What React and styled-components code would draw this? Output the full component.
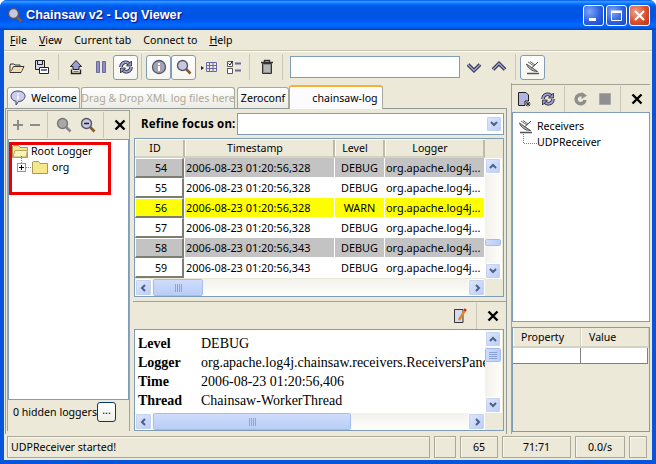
import React from "react";
import styled, { createGlobalStyle } from "styled-components";

const Global = createGlobalStyle`
  html, body { margin: 0; padding: 0; }
  body { font-family: "Noto Sans", "Liberation Sans", sans-serif; font-size: 10.6px; color: #000; }
  * { box-sizing: border-box; }
`;

/* window chrome */
const Win = styled.div`
  width: 656px; height: 464px; display: flex; flex-direction: column; overflow: hidden;
  background: #0855dd; border-radius: 7px 7px 0 0; position: relative;
`;
const TitleBar = styled.div`
  height: 30px; flex: none; display: flex; align-items: center; padding: 0 6px 0 7px;
  background: linear-gradient(180deg,#0058ee 0%,#3593ff 5%,#288eff 8%,#127dff 11%,#0369fb 15%,#0057e5 24%,#0054e3 50%,#0055eb 62%,#005bf5 72%,#026afe 82%,#0062ef 90%,#0052d6 96%,#0040ab 100%);
`;
const TitleText = styled.div`
  margin-left: 3px; flex: 1; color: #fff; font: bold 12.7px "Liberation Sans", sans-serif;
  text-shadow: 1px 1px 1px #0f1089;
`;
const WinBtn = styled.div`
  width: 21px; height: 21px; margin-left: 2px; border: 1px solid #fff; border-radius: 3px;
  display: flex; align-items: center; justify-content: center;
  background: ${(p) => p.$close
    ? "radial-gradient(circle at 30% 30%, #f0a08a, #d9512c 55%, #b5321a)"
    : "radial-gradient(circle at 30% 30%, #7fa5f5, #2b62e0 55%, #1c47c8)"};
`;
const Body = styled.div`
  flex: 1; margin: 0 4px 4px; background: #ece9d8; display: flex; flex-direction: column; min-height: 0;
`;
const MenuBar = styled.div`
  height: 21px; flex: none; display: flex; align-items: center; padding: 0 0 1px 6px; gap: 12px;
  border-bottom: 1px solid #c5c2b2; box-shadow: 0 1px 0 #fff;
  u { text-decoration: underline; }
`;
const Toolbar = styled.div`
  height: 32px; flex: none; display: flex; align-items: center;
`;
const ToolBtn = styled.div`
  width: 25px; height: 25px; flex: none; display: flex; align-items: center; justify-content: center;
  border-radius: 3px;
  ${(p) => p.$on && "background: linear-gradient(180deg,#fff,#f6f5ef); border: 1px solid #7f9db9;"}
`;
const Sep = styled.div`
  width: 1px; height: 26px; flex: none; margin: 0 4px 0 ${(p) => p.$l ?? 4}px; background: #c9c6b6;
`;
const SearchInput = styled.div`
  width: 170px; height: 22px; flex: none; margin: 0 1px 0 3px; background: #fff; border: 1px solid #7f9db9;
`;

/* content split */
const Content = styled.div`
  flex: 1; min-height: 0; display: flex;
`;
const TabArea = styled.div`
  width: 503px; flex: none; display: flex; flex-direction: column; padding: 2px 0 0 1px;
`;
const TabStrip = styled.div`
  height: 23px; flex: none; display: flex; align-items: flex-end; padding-left: 2px; position: relative; z-index: 1;
`;
const Tab = styled.div`
  width: ${(p) => p.$w}px; height: 21px; flex: none; margin-right: ${(p) => p.$mr ?? 1}px;
  display: flex; align-items: center; justify-content: center; gap: 5px; white-space: nowrap;
  color: ${(p) => (p.$off ? "#aca899" : "#000")};
  border: 1px solid #a8a99c; border-bottom: none; border-radius: 3px 3px 0 0;
  background: ${(p) => (p.$on ? "#fcfcfe" : "linear-gradient(180deg,#fff,#ecebe3)")};
  ${(p) => p.$on && "border-top: 2px solid #f7b034; margin-bottom: -1px; height: 24px; padding-left: 18px;"}
`;
const TabPane = styled.div`
  flex: 1; min-height: 0; display: flex; border: 1px solid #919b9c; border-bottom: none; padding: 1px 0 3px 1px;
`;
const LeftPanel = styled.div`
  width: 123px; flex: none; display: flex; flex-direction: column; border: 1px solid #a5a293; border-bottom: none;
`;
const PaneBar = styled.div`
  height: ${(p) => p.$h || 28}px; flex: none; display: flex; align-items: center;
  justify-content: ${(p) => (p.$end ? "flex-end" : "flex-start")}; padding-left: ${(p) => p.$pl || 0}px;
`;
const PaneBtn = styled.div`
  width: ${(p) => p.$w || 24}px; height: 22px; flex: none; display: flex; align-items: center; justify-content: center;
`;
const TreeBox = styled.div`
  flex: 1; min-height: 0; background: #fff; border: 1px solid #7f9db9; position: relative; padding: ${(p) => p.$pad || "3px 0 0 3px"};
`;
const TreeRow = styled.div`
  height: 16px; display: flex; align-items: center; gap: ${(p) => p.$gap ?? 3}px; padding-left: ${(p) => p.$pl || 0}px;
`;
const OrgLabel = styled.span`
  margin-left: 4px;
`;
const Mark = styled.div`
  position: absolute; left: 0; top: 2px; width: 102px; height: 53px; border: 3px solid #ee0000;
`;
const PanelFoot = styled.div`
  height: 31px; flex: none; display: flex; align-items: center; justify-content: space-between; padding: 0 13px 7px 5px;
  white-space: nowrap;
`;
const DotsBtn = styled.div`
  width: 19px; height: 20px; display: flex; align-items: center; justify-content: center; padding-bottom: 4px;
  background: linear-gradient(180deg,#fff,#f0efe6); border: 1px solid #003c74; border-radius: 3px;
`;
const Center = styled.div`
  flex: 1; min-width: 0; margin-left: 4px; display: flex; flex-direction: column; padding-right: 1px;
`;
const RefineRow = styled.div`
  height: 28px; flex: none; display: flex; align-items: center; padding: 0 0 1px 7px;
`;
const RefineLabel = styled.div`
  width: 96px; flex: none; font-weight: bold; font-size: 11.5px; letter-spacing: 0.2px;
`;
const Combo = styled.div`
  flex: 1; height: 22px; margin-right: 1px; display: flex; justify-content: flex-end; align-items: center; padding-right: 1px;
  background: #fff; border: 1px solid #7f9db9;
`;
const ScrollFrame = styled.div`
  height: ${(p) => (p.$h ? p.$h + "px" : "auto")}; ${(p) => !p.$h && "flex: 1;"} min-height: 0; flex-shrink: 0;
  margin-right: 1px; display: flex; flex-direction: column; border: 1px solid #7f9db9; background: #ece9d8;
`;
const ScrollMain = styled.div`
  flex: 1; min-height: 0; display: flex;
`;
const Columns = styled.div`
  width: 350px; flex: none; overflow: hidden;
`;
const HeadRow = styled.div`
  height: 19px; display: flex; border-top: 1px solid #fff;
`;
const HeadCell = styled.div`
  width: ${(p) => p.$w}px; flex: none; display: flex; align-items: center; justify-content: center; padding-right: 8px;
  background: #ece9d8; border-right: 2px solid #bdbaa9; border-bottom: 2px solid #d5d2c1; box-shadow: inset 1px 0 0 #fff;
`;
const Row = styled.div`
  height: 20px; display: flex; background: #fff;
`;
const NumCell = styled.div`
  width: 49px; height: 20px; flex: none; display: flex; align-items: center; justify-content: center; padding-left: 4px;
  background: ${(p) => p.$bg}; border: 1px solid #fff; border-right: 2px solid #7d7d70; border-bottom: 2px solid #7d7d70;
`;
const DataCell = styled.div`
  width: ${(p) => p.$w}px; height: 19px; flex: none; display: flex; align-items: center; font-size: 10.9px;
  justify-content: ${(p) => (p.$mid ? "center" : "flex-start")}; padding-left: ${(p) => (p.$mid ? 0 : 1)}px; margin-left: 1px;
  background: ${(p) => p.$bg}; white-space: nowrap; overflow: hidden;
`;
const VTrack = styled.div`
  width: 17px; flex: none; display: flex; flex-direction: column; background: linear-gradient(90deg,#f3f1ec,#fefefb);
  padding-top: ${(p) => p.$pt || 0}px;
`;
const Corner = styled.div`
  height: 19px; margin-top: -19px; flex: none; background: #ece9d8;
`;
const HTrack = styled.div`
  height: 17px; flex: none; display: flex; align-items: stretch; background: linear-gradient(180deg,#f3f1ec,#fefefb);
  width: 350px;
`;
const ScrollBtn = styled.div`
  width: ${(p) => (p.$v ? 16 : 17)}px; height: ${(p) => (p.$v ? 16 : 17)}px; flex: none; display: flex; align-items: center; justify-content: center;
  background: linear-gradient(135deg,#dfe8fe,#b9cbf8); border: 1px solid #fff; border-radius: 2px; box-shadow: 0 0 0 1px #c6d3ef inset;
  ${(p) => p.$last && (p.$v ? "margin-top: auto;" : "margin-left: auto;")}
`;
const Thumb = styled.div`
  ${(p) => (p.$v
    ? `width: 16px; height: ${p.$len}px; margin-top: ${p.$off}px; flex-direction: column;`
    : `width: ${p.$len}px; margin-left: ${p.$off}px;`)}
  flex-shrink: 0; display: flex; align-items: center; justify-content: center; gap: 1px;
  background: linear-gradient(${(p) => (p.$v ? "90deg" : "180deg")},#cfdcfb,#b9cdf7);
  border: 1px solid #fff; border-radius: 2px; outline: 1px solid #a7bde9; outline-offset: -1px;
  i { display: block; background: #8aa3dd; ${(p) => (p.$v ? "width: 8px; height: 1px;" : "width: 1px; height: 8px;")} }
`;
const Splitter = styled.div`
  height: 5px; flex: none; margin: 0 -1px; border-bottom: 1px solid #a5a293;
`;
const Details = styled.div`
  width: 350px; flex: none; background: #fff; padding: 4px 0 0 3px; overflow: hidden;
  font: 14px "Liberation Serif", serif;
`;
const DetailRow = styled.div`
  height: 19px; display: flex; align-items: center; white-space: nowrap;
  b { width: 63px; flex: none; }
`;

/* right column */
const RightPanel = styled.div`
  flex: 1; min-width: 0; display: flex; flex-direction: column; margin-left: 4px; padding: 1px 2px 2px 0;
  border-left: 1px solid #a5a293;
`;
const RightTop = styled.div`
  height: 28px; flex: none; display: flex; align-items: center; border-top: 1px solid #a5a293;
`;
const PropBox = styled.div`
  height: 105px; flex: none; margin-top: 5px; border: 1px solid #7f9db9;
`;
const PropHead = styled.div`
  height: 20px; display: flex; border-bottom: 2px solid #d5d2c1;
`;
const PropHeadCell = styled.div`
  width: ${(p) => p.$w}px; flex: none; padding-left: ${(p) => p.$pl}px; display: flex; align-items: center;
  border-right: 1px solid #d0cdbc; box-shadow: inset 1px 0 0 #fff;
`;
const PropRow = styled.div`
  height: 16px; display: flex; background: #fff; border-bottom: 1px solid #808080; margin-right: 1px;
`;
const PropCell = styled.div`
  width: ${(p) => p.$w}px; flex: none; border-right: 1px solid #808080;
`;

/* status bar */
const Status = styled.div`
  height: 26px; flex: none; display: flex; align-items: center; padding: 0 2px 0 3px; gap: 4px;
`;
const StatusCell = styled.div`
  width: ${(p) => p.$w}px; height: 22px; flex: none; display: flex; align-items: center;
  justify-content: ${(p) => (p.$left ? "flex-start" : "center")}; padding-left: ${(p) => (p.$left ? 3 : 0)}px;
  border: 1px solid #aca899; box-shadow: inset 1px 1px 0 #f7f6ef;
`;

/* icons */
const Svg = ({ s = 16, children }) => (
  <svg width={s} height={s} viewBox="0 0 16 16" fill="none">{children}</svg>
);
const Chevron = ({ dir }) => {
  const d = { up: "M2 7 5 4 8 7", down: "M2 3 5 6 8 3", left: "M6 2 3 5 6 8", right: "M4 2 7 5 4 8" }[dir];
  return <svg width="10" height="10" viewBox="0 0 10 10" fill="none"><path d={d} stroke="#4d6185" strokeWidth="2" /></svg>;
};
const BigChevron = ({ up }) => {
  const d = up ? "M2 10.5 8 4.5 14 10.5" : "M2 5.5 8 11.5 14 5.5";
  return (
    <Svg>
      <path d={d} stroke="#2c2c3c" strokeWidth="3.6" />
      <path d={d} stroke="#9a9cd6" strokeWidth="1.6" />
    </Svg>
  );
};
const CloseX = () => (
  <Svg><path d="M3.5 3.5 12.5 12.5M12.5 3.5 3.5 12.5" stroke="#000" strokeWidth="2.4" /></Svg>
);
const FolderOpen = () => (
  <Svg><path d="M1 6V13.5H12L15 7.5H4.5L2.5 12" fill="#f3e9d0" stroke="#333" /><path d="M1.5 6V5H5L6 6H11V7.5" stroke="#333" /><path d="M2 13 5 8.5H14L12 13Z" fill="#f1dcb0" /></Svg>
);
const Save = () => (
  <Svg><path d="M1.5 1.5H10.5V10.5H1.5Z" fill="#d6d8ee" stroke="#222" /><path d="M3.5 1.5V5.5H8.5V1.5" stroke="#222" /><path d="M5.5 8.5H14.5V14.5H5.5Z" fill="#fff" stroke="#222" /><path d="M7 11H13" stroke="#6c6fb0" strokeWidth="2" /></Svg>
);
const UpArrow = () => (
  <Svg><path d="M8 1.5 13.5 7.5H11V10.5H5V7.5H2.5Z" fill="#9aa0d4" stroke="#222" /><path d="M3.5 10.5V14.5H12.5V10.5" stroke="#222" strokeWidth="1.4" /><path d="M5.5 12.5H10.5" stroke="#777" /></Svg>
);
const Pause = () => (
  <Svg><path d="M3.5 2.5H6.5V13.5H3.5ZM9.5 2.5H12.5V13.5H9.5Z" fill="#8f90c4" stroke="#686a9c" /></Svg>
);
const Refresh = () => (
  <Svg>
    <path d="M3 8C3 4.5 6 2.8 9 3.4L11.5 5M13 8C13 11.5 10 13.2 7 12.6L4.5 11" stroke="#222" strokeWidth="3.6" />
    <path d="M3 8C3 4.5 6 2.8 9 3.4L11.5 5M13 8C13 11.5 10 13.2 7 12.6L4.5 11" stroke="#9a9bd8" strokeWidth="2" />
    <path d="M13.5 2V7H8.5ZM2.5 14V9H7.5Z" fill="#9a9bd8" stroke="#222" strokeWidth="0.8" />
  </Svg>
);
const Info = () => (
  <Svg><circle cx="8" cy="8" r="6.5" fill="#a4a2b4" stroke="#55536a" strokeWidth="1.3" /><path d="M7 4h2v2H7zM7 7h2v5H7z" fill="#fff" /></Svg>
);
const Magnifier = ({ gray, minus }) => (
  <Svg>
    <path d="M9.5 9.5 14.5 14.5" stroke={gray ? "#8a8a8a" : "#8a5a2a"} strokeWidth="2.6" />
    <circle cx="6.5" cy="6.5" r="5" fill={gray ? "#a8a8a8" : "#c6c8de"} stroke={gray ? "#777" : "#55566e"} strokeWidth="1.4" />
    {minus && <path d="M4 6.5H9" stroke="#222" strokeWidth="1.4" />}
  </Svg>
);
const TableArrow = () => (
  <Svg><path d="M5.5 3.5H15.5V12.5H5.5ZM5.5 6.5H15.5M5.5 9.5H15.5M8.5 3.5V12.5M12 3.5V12.5" stroke="#6667a8" /><path d="M0 7 3 9 0 11Z" fill="#222" /></Svg>
);
const Checks = () => (
  <Svg><path d="M1.5 2.5H6.5V7.5H1.5ZM1.5 9.5H6.5V14.5H1.5Z" fill="#fff" stroke="#555" /><path d="M2.5 4.5 4 6 6.5 2" stroke="#111" /><path d="M9 4.5H15M9 11.5H15" stroke="#66679c" strokeWidth="2" /></Svg>
);
const Trash = () => (
  <Svg><path d="M2 3.5H14M5.5 3V1.5H10.5V3" stroke="#333" strokeWidth="1.4" /><path d="M3.5 4.5H12.5V14.5H3.5Z" fill="#8e8e8e" stroke="#333" /><path d="M6 6V13M8 6V13M10 6V13" stroke="#ddd" /></Svg>
);
const Dish = () => (
  <Svg>
    <path d="M1.5 5C3 9.5 7 12.5 12.5 12.5Z" fill="#b5b5b5" stroke="#555" />
    <path d="M6.5 9 11 5M11 5 13 3" stroke="#444" />
    <path d="M2 14.5H14" stroke="#555" strokeWidth="1.6" />
    <path d="M3 3 9 7M5 2.5 10 6" stroke="#666" />
  </Svg>
);
const Balloon = () => (
  <Svg><path d="M8 1C12 1 15 3.2 15 6.2S12 11.5 8.5 11.5L6 15V11.3C3 10.8 1 8.8 1 6.2 1 3.2 4 1 8 1Z" fill="#c9cdeb" stroke="#44465e" /><path d="M7.2 3h1.6v1.5H7.2zM7.2 5.5h1.6v4H7.2z" fill="#fff" /></Svg>
);
const Folder = ({ open }) => (
  <Svg>
    <path d="M.5 3V14.5H15.5V4.5H8L6.5 2.5H1.5Z" fill="#f6e88a" stroke="#a69a5c" />
    {open && <path d="M1 14 3 7.5H15.5L14 14Z" fill="#fbf3b8" stroke="#b3a86c" />}
  </Svg>
);
const NewDoc = () => (
  <Svg><path d="M2.5 1.5H10L12.5 4V10H9V14.5H2.5Z" fill="#b2b4e2" stroke="#222" /><path d="M12 10.5V15.5M9.5 13H14.5M10.2 11.2 13.8 14.8M13.8 11.2 10.2 14.8" stroke="#333" /></Svg>
);
const Redo = () => (
  <Svg><path d="M12 9A4.5 4.5 0 1 1 9 4" stroke="#8d8d8d" strokeWidth="3.4" /><path d="M8.5 1V8L14 4.5Z" fill="#8d8d8d" /></Svg>
);
const StopIcon = () => (
  <Svg><path d="M2.5 2.5H13.5V13.5H2.5Z" fill="#8f8f8f" stroke="#a9a9a9" /></Svg>
);
const Pencil = () => (
  <Svg><path d="M2.5 1.5H11V14.5H2.5Z" fill="#d8d9ee" stroke="#333" /><path d="M13.5 1.5 7 12" stroke="#d98a20" strokeWidth="2.4" /><path d="M13.7 1 12.6 2.8" stroke="#c22" strokeWidth="2.4" /></Svg>
);
const Plus = () => <Svg><path d="M3 8H13M8 3V13" stroke="#8d8d8d" strokeWidth="2" /></Svg>;
const Minus = () => <Svg><path d="M3 8H13" stroke="#8d8d8d" strokeWidth="2" /></Svg>;
const Expander = () => (
  <svg width="15" height="24" viewBox="0 0 15 24" fill="none">
    <path d="M4.5 1V8M9 12.5H15" stroke="#808080" strokeDasharray="1 1" />
    <rect x="0.5" y="8.5" width="8" height="8" fill="#fff" stroke="#7f9db9" />
    <path d="M2 12.5H7M4.5 10V15" stroke="#000" />
  </svg>
);
const Elbow = () => (
  <svg width="14" height="17" viewBox="0 0 14 17" fill="none">
    <path d="M.5 0V9.5H14" stroke="#808080" strokeDasharray="1 1" />
  </svg>
);

const grip = (
  <><i /><i /><i /><i /></>
);

const COLS = [49, 149, 49, 99];
const BG = { grey: "#c3c3c3", white: "#fff", yellow: "#ffff00" };
const rows = [
  [54, "2006-08-23 01:20:56,328", "DEBUG", "grey"],
  [55, "2006-08-23 01:20:56,328", "DEBUG", "white"],
  [56, "2006-08-23 01:20:56,328", "WARN", "yellow"],
  [57, "2006-08-23 01:20:56,328", "DEBUG", "white"],
  [58, "2006-08-23 01:20:56,343", "DEBUG", "grey"],
  [59, "2006-08-23 01:20:56,343", "DEBUG", "white"],
];

export default function App() {
  return (
    <Win>
      <Global />
      <TitleBar>
        <Magnifier />
        <TitleText>Chainsaw v2 - Log Viewer</TitleText>
        <WinBtn><svg width="13" height="13" viewBox="0 0 13 13"><path d="M2 9H9V12H2Z" fill="#fff" /></svg></WinBtn>
        <WinBtn><svg width="13" height="13" viewBox="0 0 13 13" fill="none"><path d="M1.5 3.5H11.5V11.5H1.5Z" stroke="#fff" /><path d="M1 2.5H12" stroke="#fff" strokeWidth="2" /></svg></WinBtn>
        <WinBtn $close><svg width="13" height="13" viewBox="0 0 13 13" fill="none"><path d="M2 2 11 11M11 2 2 11" stroke="#fff" strokeWidth="2.2" /></svg></WinBtn>
      </TitleBar>
      <Body>
        <MenuBar>
          <span><u>F</u>ile</span>
          <span><u>V</u>iew</span>
          <span>Current tab</span>
          <span>Connect to</span>
          <span><u>H</u>elp</span>
        </MenuBar>
        <Toolbar>
          <ToolBtn><FolderOpen /></ToolBtn>
          <ToolBtn><Save /></ToolBtn>
          <Sep />
          <ToolBtn><UpArrow /></ToolBtn>
          <ToolBtn><Pause /></ToolBtn>
          <ToolBtn $on><Refresh /></ToolBtn>
          <Sep $l={3} />
          <ToolBtn $on><Info /></ToolBtn>
          <ToolBtn $on><Magnifier /></ToolBtn>
          <ToolBtn><TableArrow /></ToolBtn>
          <ToolBtn><Checks /></ToolBtn>
          <Sep $l={3} />
          <ToolBtn><Trash /></ToolBtn>
          <Sep $l={3} />
          <SearchInput />
          <ToolBtn><BigChevron /></ToolBtn>
          <ToolBtn><BigChevron up /></ToolBtn>
          <Sep />
          <ToolBtn $on><Dish /></ToolBtn>
        </Toolbar>
        <Content>
          <TabArea>
            <TabStrip>
              <Tab $w={73}><Balloon />Welcome</Tab>
              <Tab $w={154} $off $mr={2}>Drag &amp; Drop XML log files here</Tab>
              <Tab $w={52} $mr={0}>Zeroconf</Tab>
              <Tab $w={94} $on>chainsaw-log</Tab>
            </TabStrip>
            <TabPane>
              <LeftPanel>
                <PaneBar $pl={1}>
                  <PaneBtn $w={17}><Plus /></PaneBtn>
                  <PaneBtn $w={17}><Minus /></PaneBtn>
                  <Sep />
                  <PaneBtn><Magnifier gray /></PaneBtn>
                  <PaneBtn><Magnifier minus /></PaneBtn>
                  <Sep $l={3} />
                  <PaneBtn><CloseX /></PaneBtn>
                </PaneBar>
                <TreeBox>
                  <TreeRow><Folder open />Root Logger</TreeRow>
                  <TreeRow $pl={5} $gap={0}><Expander /><Folder /><OrgLabel>org</OrgLabel></TreeRow>
                  <Mark />
                </TreeBox>
                <PanelFoot>
                  <span>0 hidden loggers</span>
                  <DotsBtn>...</DotsBtn>
                </PanelFoot>
              </LeftPanel>
              <Center>
                <RefineRow>
                  <RefineLabel>Refine focus on:</RefineLabel>
                  <Combo><ScrollBtn $v><Chevron dir="down" /></ScrollBtn></Combo>
                </RefineRow>
                <ScrollFrame $h={159}>
                  <ScrollMain>
                    <Columns>
                      <HeadRow>
                        <HeadCell $w={50}>ID</HeadCell>
                        <HeadCell $w={150}>Timestamp</HeadCell>
                        <HeadCell $w={50}>Level</HeadCell>
                        <HeadCell $w={100}>Logger</HeadCell>
                      </HeadRow>
                      {rows.map(([id, ts, level, tone]) => (
                        <Row key={id}>
                          <NumCell $bg={BG[tone]}>{id}</NumCell>
                          <DataCell $w={COLS[1]} $bg={BG[tone]}>{ts}</DataCell>
                          <DataCell $w={COLS[2]} $bg={BG[tone]} $mid>{level}</DataCell>
                          <DataCell $w={COLS[3]} $bg={BG[tone]}>org.apache.log4j...</DataCell>
                        </Row>
                      ))}
                    </Columns>
                    <VTrack $pt={19}>
                      <Corner />
                      <ScrollBtn $v><Chevron dir="up" /></ScrollBtn>
                      <Thumb $v $len={7} $off={65} />
                      <ScrollBtn $v $last><Chevron dir="down" /></ScrollBtn>
                    </VTrack>
                  </ScrollMain>
                  <HTrack>
                    <ScrollBtn><Chevron dir="left" /></ScrollBtn>
                    <Thumb $len={50} $off={1}>{grip}</Thumb>
                    <ScrollBtn $last><Chevron dir="right" /></ScrollBtn>
                  </HTrack>
                </ScrollFrame>
                <Splitter />
                <PaneBar $h={27} $end>
                  <PaneBtn><Pencil /></PaneBtn>
                  <Sep />
                  <PaneBtn><CloseX /></PaneBtn>
                </PaneBar>
                <ScrollFrame>
                  <ScrollMain>
                    <Details>
                      <DetailRow><b>Level</b>DEBUG</DetailRow>
                      <DetailRow><b>Logger</b>org.apache.log4j.chainsaw.receivers.ReceiversPanel</DetailRow>
                      <DetailRow><b>Time</b>2006-08-23 01:20:56,406</DetailRow>
                      <DetailRow><b>Thread</b>Chainsaw-WorkerThread</DetailRow>
                    </Details>
                    <VTrack $pt={1}>
                      <ScrollBtn $v><Chevron dir="up" /></ScrollBtn>
                      <Thumb $v $len={14} $off={1}>{grip}</Thumb>
                      <ScrollBtn $v $last><Chevron dir="down" /></ScrollBtn>
                    </VTrack>
                  </ScrollMain>
                  <HTrack>
                    <ScrollBtn><Chevron dir="left" /></ScrollBtn>
                    <Thumb $len={198} $off={1}>{grip}</Thumb>
                    <ScrollBtn $last><Chevron dir="right" /></ScrollBtn>
                  </HTrack>
                </ScrollFrame>
              </Center>
            </TabPane>
          </TabArea>
          <RightPanel>
            <RightTop>
              <PaneBtn><NewDoc /></PaneBtn>
              <PaneBtn><Refresh /></PaneBtn>
              <Sep />
              <PaneBtn><Redo /></PaneBtn>
              <PaneBtn><StopIcon /></PaneBtn>
              <Sep $l={3} />
              <PaneBtn><CloseX /></PaneBtn>
            </RightTop>
            <TreeBox $pad="5px 0 0 5px">
              <TreeRow><Dish />Receivers</TreeRow>
              <TreeRow $pl={5} $gap={0}><Elbow />UDPReceiver</TreeRow>
            </TreeBox>
            <PropBox>
              <PropHead>
                <PropHeadCell $w={68} $pl={8}>Property</PropHeadCell>
                <PropHeadCell $w={68} $pl={8}>Value</PropHeadCell>
              </PropHead>
              <PropRow>
                <PropCell $w={68} />
                <PropCell $w={67} />
              </PropRow>
            </PropBox>
          </RightPanel>
        </Content>
        <Status>
          <StatusCell $w={423} $left>UDPReceiver started!</StatusCell>
          <StatusCell $w={22} />
          <StatusCell $w={38}>65</StatusCell>
          <StatusCell $w={69}>71:71</StatusCell>
          <StatusCell $w={50}>0.0/s</StatusCell>
          <StatusCell $w={18} />
        </Status>
      </Body>
    </Win>
  );
}
